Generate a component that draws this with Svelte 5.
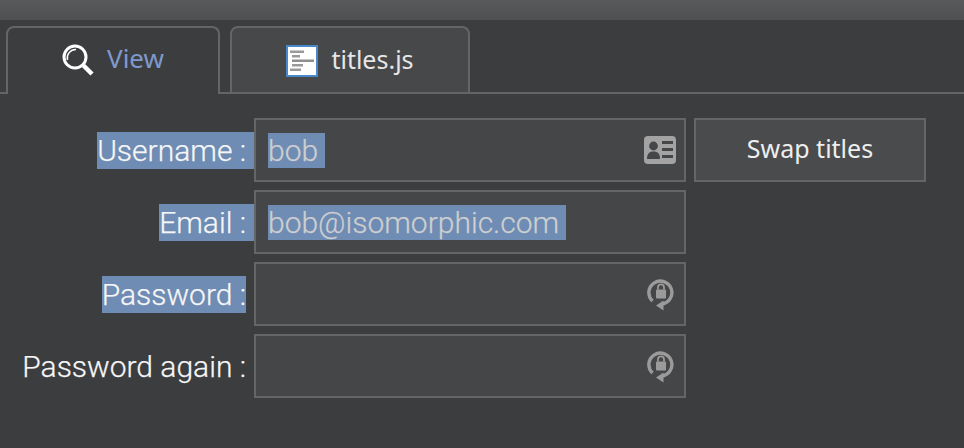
<script lang="ts">
  const fields = [
    { label: 'Username :', value: 'bob', icon: 'card', selected: true },
    { label: 'Email :', value: 'bob@isomorphic.com', icon: '', selected: true },
    { label: 'Password :', value: '', icon: 'lock', selected: true },
    { label: 'Password again :', value: '', icon: 'lock', selected: false },
  ]
</script>

<div class="page">
  <div class="topbar"></div>

  <div class="tabs">
    <div class="tab tab-active">
      <svg class="view-icon" width="34" height="34" viewBox="0 0 34 34">
        <circle cx="14" cy="14" r="11" fill="none" stroke="#fff" stroke-width="3" />
        <path d="M6.5 17 A8.5 8.5 0 0 1 15 6.5" fill="none" stroke="#fff" stroke-width="1.5" />
        <path d="M22.5 22.5 L31 31" fill="none" stroke="#fff" stroke-width="4.5" />
      </svg>
      <span class="view-label">View</span>
    </div>
    <div class="tab">
      <svg class="file-icon" width="32" height="32" viewBox="0 0 32 32">
        <rect x="1" y="1" width="30" height="30" fill="#fff" stroke="#4a88cc" stroke-width="2" />
        <rect x="4" y="5.5" width="14" height="2.5" fill="#9a9a9a" />
        <rect x="6" y="10" width="8" height="2.5" fill="#9a9a9a" />
        <rect x="6" y="14.5" width="22" height="2.5" fill="#8e8e8e" />
        <rect x="6" y="19" width="11" height="2.5" fill="#9a9a9a" />
        <rect x="4" y="23.5" width="11" height="2.5" fill="#9a9a9a" />
      </svg>
      <span class="tab-label">titles.js</span>
    </div>
    <div class="tab-rest"></div>
  </div>

  <div class="form">
    {#each fields as field, i}
      <div class="label-cell">
        <span class="label" class:selected={field.selected} class:trim={field.label === 'Password :'}>{field.label}</span>
      </div>
      <div class="input">
        {#if field.value}
          <span class="value">{field.value}</span>
        {/if}
        {#if field.icon === 'card'}
          <svg class="input-icon" width="32" height="28" viewBox="0 0 32 28">
            <rect width="32" height="28" rx="4" fill="#a3a3a3" />
            <circle cx="9.5" cy="10" r="4.4" fill="#454648" />
            <path d="M3 23 C3 17 6 15.5 9.5 15.5 C13 15.5 16 17 16 23 Z" fill="#454648" />
            <rect x="18" y="5" width="11" height="3" fill="#454648" />
            <rect x="18" y="12" width="11" height="3" fill="#454648" />
            <rect x="18" y="19" width="11" height="3" fill="#454648" />
          </svg>
        {:else if field.icon === 'lock'}
          <svg class="input-icon lock" width="28" height="34" viewBox="0 0 28 34">
            <path d="M5.5 24 A11.5 11.5 0 1 1 15 27" fill="none" stroke="#9b9b9b" stroke-width="3.4" />
            <path d="M16.5 23.5 L9 28.5 L16.5 33.5 Z" fill="#9b9b9b" />
            <path d="M11 12.5 V10.3 A3 3 0 0 1 17 10.3 V12.5" fill="none" stroke="#9b9b9b" stroke-width="1.8" />
            <rect x="9" y="12.5" width="10" height="9" rx="0.8" fill="#9b9b9b" />
          </svg>
        {/if}
      </div>
      {#if i === 0}
        <button class="swap">Swap titles</button>
      {:else}
        <div></div>
      {/if}
    {/each}
  </div>
</div>

<style>
  :global(body) {
    margin: 0;
    background: #3c3d3f;
  }

  .page {
    width: 964px;
    height: 448px;
    overflow: hidden;
    background: #3c3d3f;
    font-family: Roboto, sans-serif;
  }

  .topbar {
    height: 20px;
    background: linear-gradient(#58595b, #4f5052);
  }

  .tabs {
    display: flex;
    align-items: flex-end;
    height: 74px;
    padding-left: 6px;
    box-sizing: border-box;
    border-bottom: 2px solid #646567;
  }

  .tab {
    box-sizing: border-box;
    display: flex;
    align-items: center;
    justify-content: center;
    gap: 13px;
    width: 240px;
    height: 66px;
    margin-left: 10px;
    padding-bottom: 2px;
    background: #47484a;
    border: 2px solid #646567;
    border-bottom: none;
    border-radius: 8px 8px 0 0;
  }

  .tab-active {
    width: 214px;
    height: 68px;
    margin-left: 0;
    margin-bottom: -2px;
    padding-bottom: 4px;
    padding-right: 1px;
    gap: 12px;
    background: #3c3d3f;
  }

  .view-icon {
    flex-shrink: 0;
    margin-top: 2px;
  }

  .file-icon {
    flex-shrink: 0;
    margin-top: 4px;
  }

  .view-label,
  .tab-label {
    font-family: 'Noto Sans', sans-serif;
    font-size: 25px;
    line-height: 32px;
  }

  .view-label {
    margin-bottom: 2px;
    font-size: 26px;
    color: #7f99cd;
  }

  .tab-label {
    color: #e6e6e6;
  }

  .tab-rest {
    flex: 1;
  }

  .form {
    display: grid;
    grid-template-columns: 254px 432px 232px;
    grid-auto-rows: 64px;
    row-gap: 8px;
    padding-top: 24px;
  }

  .label-cell {
    display: flex;
    justify-content: flex-end;
    align-items: center;
    height: 64px;
  }

  .label {
    padding-right: 8px;
    margin-top: 1px;
    font-size: 30px;
    font-weight: 300;
    line-height: 37px;
    color: #f6f6f6;
    white-space: nowrap;
    -webkit-text-stroke: 0.25px #f6f6f6;
  }

  .label.selected {
    background: #6e8cb4;
  }

  .label.trim {
    padding-right: 0;
    margin-right: 8px;
  }

  .input {
    box-sizing: border-box;
    display: flex;
    align-items: center;
    justify-content: space-between;
    height: 64px;
    padding: 0 8px 0 12px;
    background: #454648;
    border: 2px solid #646567;
  }

  .value {
    padding-right: 7px;
    font-size: 30px;
    font-weight: 300;
    line-height: 35px;
    color: #cfcfcf;
    background: #6e8cb4;
    -webkit-text-stroke: 0.25px #cfcfcf;
  }

  .input-icon {
    margin-left: auto;
  }

  .lock {
    margin-right: 1px;
  }

  .swap {
    box-sizing: border-box;
    width: 232px;
    height: 64px;
    margin-left: 8px;
    padding: 0 0 4px;
    background: #4a4b4d;
    border: 2px solid #646567;
    font-family: 'Noto Sans', sans-serif;
    font-size: 25px;
    color: #eeeeee;
  }
</style>
